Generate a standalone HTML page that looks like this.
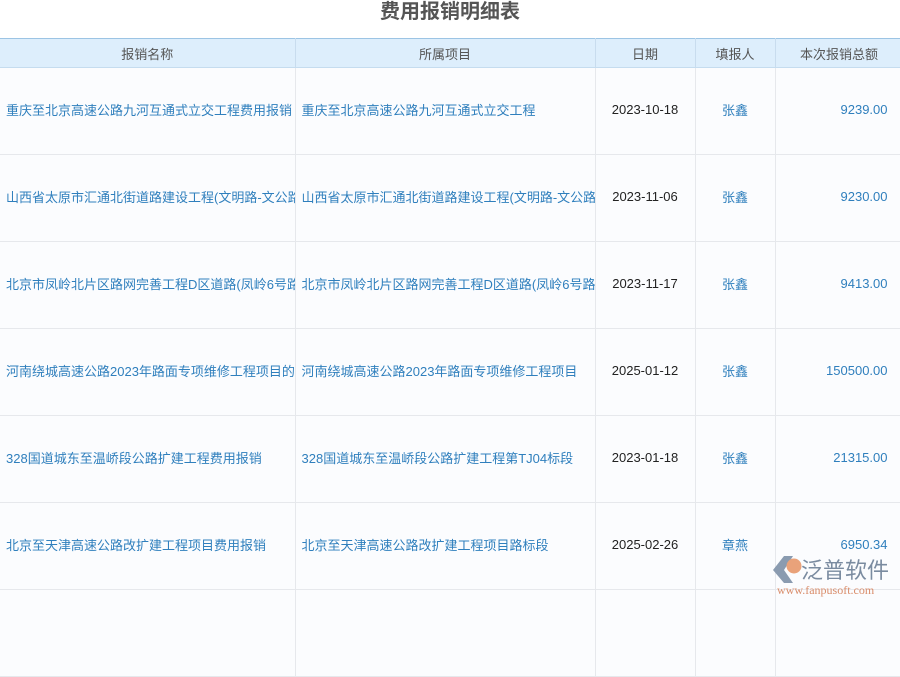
<!DOCTYPE html><html><head><meta charset="utf-8"><style>
*{margin:0;padding:0;box-sizing:border-box}
body{width:900px;height:600px;overflow:hidden;background:#fff;font-family:"Liberation Sans","Noto Sans CJK SC",sans-serif;position:relative}
.t{position:absolute;top:-1px;left:0;width:900px;text-align:center;font-size:20px;font-weight:bold;color:#555;line-height:26px}
table{position:absolute;top:38px;left:0;border-collapse:collapse;table-layout:fixed;width:903px}
th{height:29px;background:#ddeefc;border-top:1px solid #9cc4e4;border-bottom:1px solid #c5dcef;border-right:1px solid #c8dcee;font-weight:normal;font-size:13px;color:#555}
td{height:87px;border-bottom:1px solid #e6e8ec;border-right:1px solid #e6e8ec;font-size:13px;color:#2f7fbd;white-space:nowrap;overflow:hidden;padding:0 6px 3px;background:#fbfcfe}
td.d{color:#222;text-align:center}td.c{text-align:center}td.r{text-align:right;padding-right:15px}
.logo{position:absolute;left:769px;top:551px;}
</style></head><body>
<div class="t">费用报销明细表</div>
<table><colgroup><col style="width:295px"><col style="width:300px"><col style="width:100px"><col style="width:80px"><col style="width:128px"></colgroup>
<tr><th>报销名称</th><th>所属项目</th><th>日期</th><th>填报人</th><th>本次报销总额</th></tr>
<tr><td>重庆至北京高速公路九河互通式立交工程费用报销</td><td>重庆至北京高速公路九河互通式立交工程</td><td class="d">2023-10-18</td><td class="c">张鑫</td><td class="r">9239.00</td></tr>
<tr><td>山西省太原市汇通北街道路建设工程(文明路-文公路</td><td>山西省太原市汇通北街道路建设工程(文明路-文公路</td><td class="d">2023-11-06</td><td class="c">张鑫</td><td class="r">9230.00</td></tr>
<tr><td>北京市凤岭北片区路网完善工程D区道路(凤岭6号路</td><td>北京市凤岭北片区路网完善工程D区道路(凤岭6号路</td><td class="d">2023-11-17</td><td class="c">张鑫</td><td class="r">9413.00</td></tr>
<tr><td>河南绕城高速公路2023年路面专项维修工程项目的</td><td>河南绕城高速公路2023年路面专项维修工程项目</td><td class="d">2025-01-12</td><td class="c">张鑫</td><td class="r">150500.00</td></tr>
<tr><td>328国道城东至温峤段公路扩建工程费用报销</td><td>328国道城东至温峤段公路扩建工程第TJ04标段</td><td class="d">2023-01-18</td><td class="c">张鑫</td><td class="r">21315.00</td></tr>
<tr><td>北京至天津高速公路改扩建工程项目费用报销</td><td>北京至天津高速公路改扩建工程项目路标段</td><td class="d">2025-02-26</td><td class="c">章燕</td><td class="r">6950.34</td></tr>
<tr><td></td><td></td><td></td><td></td><td></td></tr>
</table>
<div class="logo"><svg width="130" height="50"><path d="M4 19 L15 5 L24 5 L15 19 L24 32 L15 32 Z" fill="#8a9bb0"/><circle cx="25" cy="15" r="7.5" fill="#e9a27a"/><text x="32" y="27" font-size="22" fill="#7a8ba0" font-family="Noto Sans CJK SC">泛普软件</text><text x="8" y="43" font-size="12" fill="#d98c6a" font-family="Liberation Serif">www.fanpusoft.com</text></svg></div>
</body></html>
